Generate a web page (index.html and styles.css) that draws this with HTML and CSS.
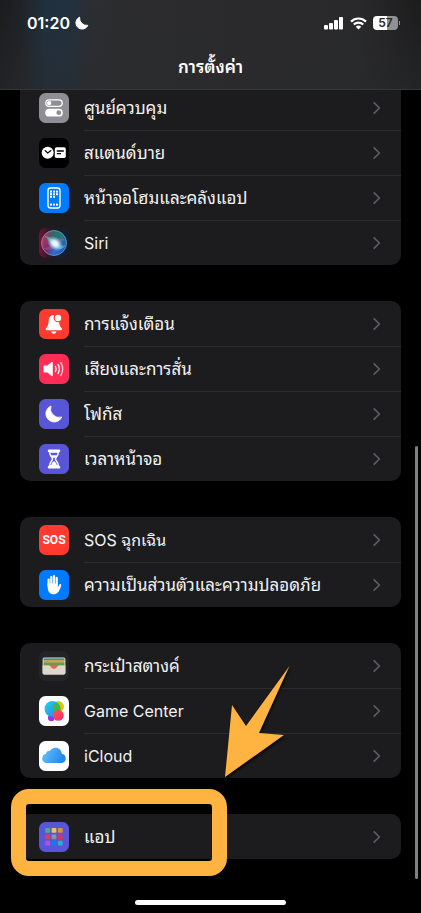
FILE: index.html
```html
<!DOCTYPE html>
<html lang="th">
<head>
  <meta charset="UTF-8" />
  <meta name="viewport" content="width=device-width, initial-scale=1.0"/>
  <title>การตั้งค่า</title>
  <link rel="stylesheet" href="styles.css">
</head>
<body>
  <svg class="defs" width="0" height="0" aria-hidden="true">
    <symbol id="chevron" viewBox="0 0 8 14">
      <path d="M1.2 1.8 L6.4 7 L1.2 12.2" fill="none" stroke="currentColor" stroke-width="1.7" stroke-linecap="round" stroke-linejoin="round"/>
    </symbol>
  </svg>

  <header class="header">
    <div class="status">
      <div class="clock">
        <span>01:20</span>
        <svg width="14" height="14" viewBox="0 0 14 14"><path d="M4.6 1.2 A6.2 6.2 0 1 0 12.8 9.4 A7.4 7.4 0 0 1 4.6 1.2Z" fill="#fff" stroke="#fff" stroke-width="1" stroke-linejoin="round"/></svg>
      </div>
      <div class="signals">
        <svg width="20" height="13" viewBox="0 0 20 13" fill="#fff">
          <rect x="0" y="8" width="4" height="4.5" rx="1"/>
          <rect x="5" y="6" width="4" height="6.5" rx="1"/>
          <rect x="10" y="3" width="4" height="9.5" rx="1"/>
          <rect x="15" y="0" width="4" height="12.5" rx="1"/>
        </svg>
        <svg width="17" height="13" viewBox="0 0 17 13" fill="none" stroke="#fff" stroke-width="2.2">
          <path d="M1 4.6 A10.6 10.6 0 0 1 16 4.6"/>
          <path d="M3.8 7.5 A6.7 6.7 0 0 1 13.2 7.5"/>
          <path d="M8.5 12.6 L5.8 9.8 A3.9 3.9 0 0 1 11.2 9.8Z" fill="#fff" stroke="none"/>
        </svg>
        <div class="battery"><span>57</span></div>
      </div>
    </div>
    <h1>การตั้งค่า</h1>
  </header>

  <main class="settings">
    <nav class="group first">
      <a class="row" href="#">
        <svg class="icon" viewBox="0 0 30 30">
          <rect width="30" height="30" rx="6.5" fill="#8e8e93"/>
          <rect x="6.8" y="6.8" width="16.4" height="6.6" rx="3.3" fill="none" stroke="#fff" stroke-width="1.3"/>
          <circle cx="10.2" cy="10.1" r="2.2" fill="#fff"/>
          <rect x="6.2" y="15.8" width="17.6" height="7.8" rx="3.9" fill="#fff"/>
          <circle cx="19.8" cy="19.7" r="2.4" fill="#8e8e93"/>
        </svg>
        <span class="label">ศูนย์ควบคุม</span>
        <svg class="chevron"><use href="#chevron"/></svg>
      </a>
      <a class="row" href="#">
        <svg class="icon" viewBox="0 0 30 30">
          <rect width="30" height="30" rx="6.5" fill="#000"/>
          <circle cx="8.7" cy="14.8" r="6" fill="#fff"/>
          <path d="M6 12.5 L8.7 15 L12 12.5" fill="none" stroke="#000" stroke-width="1.1" stroke-linecap="round"/>
          <rect x="15.8" y="9.3" width="11" height="10.8" rx="1.8" fill="#fff"/>
          <path d="M17.8 13 H24.8 M17.8 15.6 H22" stroke="#000" stroke-width="1.3"/>
        </svg>
        <span class="label">สแตนด์บาย</span>
        <svg class="chevron"><use href="#chevron"/></svg>
      </a>
      <a class="row" href="#">
        <svg class="icon" viewBox="0 0 30 30">
          <rect width="30" height="30" rx="6.5" fill="#007aff"/>
          <rect x="9" y="5" width="12" height="20" rx="2.4" fill="none" stroke="#fff" stroke-width="1.4"/>
          <g fill="#fff">
            <rect x="11" y="7.6" width="2" height="2"/><rect x="14" y="7.6" width="2" height="2"/><rect x="17" y="7.6" width="2" height="2"/>
            <rect x="11" y="10.2" width="2" height="2"/><rect x="14" y="10.2" width="2" height="2"/><rect x="17" y="10.2" width="2" height="2"/>
            <rect x="11" y="12.8" width="2" height="2"/><rect x="14" y="12.8" width="2" height="2"/>
            <rect x="11" y="20.6" width="2" height="2"/><rect x="14" y="20.6" width="2" height="2"/><rect x="17" y="20.6" width="2" height="2"/>
          </g>
        </svg>
        <span class="label">หน้าจอโฮมและคลังแอป</span>
        <svg class="chevron"><use href="#chevron"/></svg>
      </a>
      <a class="row" href="#">
        <svg class="icon" viewBox="0 0 30 30">
          <defs>
            <linearGradient id="siriBg" x1="0" y1="0" x2="1" y2="0">
              <stop offset="0" stop-color="#7a0f38"/><stop offset=".4" stop-color="#1c1c24"/><stop offset="1" stop-color="#10203a"/>
            </linearGradient>
            <linearGradient id="siriOrb" x1="0" y1=".3" x2="1" y2=".7">
              <stop offset="0" stop-color="#d42b60"/><stop offset=".35" stop-color="#70306c"/><stop offset=".65" stop-color="#2a6fd0"/><stop offset="1" stop-color="#1c58c0"/>
            </linearGradient>
            <radialGradient id="siriTop" cx=".65" cy=".15" r=".6">
              <stop offset="0" stop-color="#1f7a66"/><stop offset="1" stop-color="#1f7a66" stop-opacity="0"/>
            </radialGradient>
            <radialGradient id="siriGlow">
              <stop offset="0" stop-color="#fff"/><stop offset=".35" stop-color="#e3f4ff" stop-opacity=".95"/><stop offset="1" stop-color="#9fdcff" stop-opacity="0"/>
            </radialGradient>
          </defs>
          <rect width="30" height="30" rx="6.5" fill="url(#siriBg)"/>
          <circle cx="15" cy="15" r="12.5" fill="url(#siriOrb)"/>
          <circle cx="15" cy="15" r="12.5" fill="url(#siriTop)" stroke="#799dab" stroke-width=".8"/>
          <path d="M5 8 C10 8 13 11 16 14 C19 17 23 19 27 17 C23 24 16 20 13 17 C10 13 8 10 5 8Z" fill="#62d1df" opacity=".5"/>
          <path d="M5 20 C9 20 12 17 15 14 C19 10 23 9 26 12 C22 13 20 17 17 19 C13 23 8 23 5 20Z" fill="#d861a4" opacity=".3"/>
          <ellipse cx="16" cy="15.5" rx="9" ry="6.5" fill="url(#siriGlow)" transform="rotate(40 16 15.5)"/>
        </svg>
        <span class="label latin">Siri</span>
        <svg class="chevron"><use href="#chevron"/></svg>
      </a>
    </nav>

    <nav class="group">
      <a class="row" href="#">
        <svg class="icon" viewBox="0 0 30 30">
          <rect width="30" height="30" rx="6.5" fill="#ff3b30"/>
          <path d="M14.8 6 C10.8 6.2 9.8 9 9.7 12 C9.5 16 8.5 17.5 7 19.2 C6.2 20.4 6.7 21.2 7.8 21.2 H21.8 C23 21.2 23.4 20.2 22.6 19.2 C21 17.4 20.3 16 20 12.5 L14.8 10Z" fill="#fff"/>
          <path d="M12.2 22.6 H17.4 C17 24.2 16 24.8 14.8 24.8 S12.6 24.2 12.2 22.6Z" fill="#fff"/>
          <circle cx="19" cy="9" r="4.3" fill="#ff3b30"/>
          <circle cx="19" cy="9" r="3.2" fill="#fff"/>
        </svg>
        <span class="label">การแจ้งเตือน</span>
        <svg class="chevron"><use href="#chevron"/></svg>
      </a>
      <a class="row" href="#">
        <svg class="icon" viewBox="0 0 30 30">
          <rect width="30" height="30" rx="6.5" fill="#ff2d55"/>
          <path d="M4.5 12.6 Q4.5 11.6 5.5 11.6 H8.4 L12.3 8.2 Q13.8 7.2 13.8 9 V21 Q13.8 22.8 12.3 21.8 L8.4 18.4 H5.5 Q4.5 18.4 4.5 17.4Z" fill="#fff"/>
          <g fill="none" stroke="#fff" stroke-width="1.4" stroke-linecap="round">
            <path d="M16.4 12.4 Q18 15 16.4 17.6"/>
            <path d="M19 10.4 Q21.8 15 19 19.6"/>
            <path d="M21.8 8.6 Q25.6 15 21.8 21.4" opacity=".75"/>
          </g>
        </svg>
        <span class="label">เสียงและการสั่น</span>
        <svg class="chevron"><use href="#chevron"/></svg>
      </a>
      <a class="row" href="#">
        <svg class="icon" viewBox="0 0 30 30">
          <rect width="30" height="30" rx="6.5" fill="#5856d6"/>
          <path d="M12 7 A8.3 8.3 0 1 0 22.8 18 A8.6 8.6 0 0 1 12 7Z" fill="#fff" stroke="#fff" stroke-width=".8" stroke-linejoin="round"/>
        </svg>
        <span class="label">โฟกัส</span>
        <svg class="chevron"><use href="#chevron"/></svg>
      </a>
      <a class="row" href="#">
        <svg class="icon" viewBox="0 0 30 30">
          <rect width="30" height="30" rx="6.5" fill="#5856d6"/>
          <rect x="8.8" y="5.4" width="12.4" height="2.8" rx="1.2" fill="#fff"/>
          <rect x="8.8" y="21.8" width="12.4" height="2.8" rx="1.2" fill="#fff"/>
          <path d="M10.6 8 C10.6 12 13.5 13 13.5 15 S10.6 18 10.6 22 H19.4 C19.4 18 16.5 17 16.5 15 S19.4 12 19.4 8Z" fill="none" stroke="#fff" stroke-width="1.4"/>
          <path d="M12 11.2 H18 Q17 13 15 14.3 Q13 13 12 11.2Z M15 17 Q18 19 18 21.8 H12 Q12 19 15 17Z" fill="#fff"/>
        </svg>
        <span class="label">เวลาหน้าจอ</span>
        <svg class="chevron"><use href="#chevron"/></svg>
      </a>
    </nav>

    <nav class="group">
      <a class="row" href="#">
        <span class="icon sos">SOS</span>
        <span class="label latin">SOS ฉุกเฉิน</span>
        <svg class="chevron"><use href="#chevron"/></svg>
      </a>
      <a class="row" href="#">
        <svg class="icon" viewBox="0 0 30 30">
          <rect width="30" height="30" rx="6.5" fill="#007aff"/>
          <g stroke="#fff" stroke-width="2.2" stroke-linecap="round" fill="none">
            <path d="M9.6 15.5 V9.6"/>
            <path d="M12.3 14 V7"/>
            <path d="M15 14 V6"/>
            <path d="M17.7 15 V7.8"/>
          </g>
          <path d="M8.5 13.5 H18.8 L18.8 17.6 L20.4 14.6 C21 13.6 22.6 14.2 22.2 15.4 C21.3 18.4 20.4 20.8 18.8 22.6 C16.6 25 12 25 10.1 22.2 C8.6 20 8.5 17 8.5 13.5Z" fill="#fff"/>
        </svg>
        <span class="label">ความเป็นส่วนตัวและความปลอดภัย</span>
        <svg class="chevron"><use href="#chevron"/></svg>
      </a>
    </nav>

    <nav class="group">
      <a class="row" href="#">
        <svg class="icon" viewBox="0 0 30 30">
          <rect width="30" height="30" rx="6.5" fill="#242426"/>
          <rect x="3.6" y="6.4" width="22.8" height="17" rx="1.6" fill="#dcd8cc"/>
          <rect x="4.6" y="7.4" width="20.8" height="2" fill="#3c8a9b"/>
          <rect x="4.6" y="9.3" width="20.8" height="2.4" fill="#c9a43b"/>
          <rect x="4.6" y="11.5" width="20.8" height="3.2" fill="#6f9a45"/>
          <path d="M11 14 H19 V17 L15 18.6 L11 17Z" fill="#dd6a58"/>
          <path d="M3.6 14.4 H9.8 C11.8 14.4 12.2 17.8 15 17.8 S18.2 14.4 20.2 14.4 H26.4 V22 Q26.4 23.4 24.8 23.4 H5.2 Q3.6 23.4 3.6 22Z" fill="#dcd8cc"/>
        </svg>
        <span class="label">กระเป๋าสตางค์</span>
        <svg class="chevron"><use href="#chevron"/></svg>
      </a>
      <a class="row" href="#">
        <svg class="icon" viewBox="0 0 30 30">
          <defs>
            <linearGradient id="gcYellow" x1="0" y1="0" x2="1" y2="1"><stop offset="0" stop-color="#b9dc1b"/><stop offset="1" stop-color="#ffb400"/></linearGradient>
            <linearGradient id="gcBlue" x1="0" y1="0" x2="1" y2="1"><stop offset="0" stop-color="#28d7e8"/><stop offset=".5" stop-color="#25a9ed"/><stop offset="1" stop-color="#3c7fe0"/></linearGradient>
            <linearGradient id="gcPink" x1="0" y1="0" x2="1" y2="1"><stop offset="0" stop-color="#f4583f"/><stop offset="1" stop-color="#ff267f"/></linearGradient>
          </defs>
          <rect width="30" height="30" rx="6.5" fill="#fff"/>
          <circle cx="19.4" cy="10.6" r="5.6" fill="url(#gcYellow)"/>
          <circle cx="12.3" cy="21.8" r="3.4" fill="#9135ee"/>
          <ellipse cx="13.4" cy="12.8" rx="7.9" ry="7.9" fill="url(#gcBlue)"/>
          <path d="M15 7 A5.6 5.6 0 0 1 21 15 A6 6 0 0 1 15 15 A7 7 0 0 1 15 7Z" fill="#48b936" opacity=".85"/>
          <circle cx="19.3" cy="19.4" r="5.4" fill="url(#gcPink)"/>
        </svg>
        <span class="label latin">Game Center</span>
        <svg class="chevron"><use href="#chevron"/></svg>
      </a>
      <a class="row" href="#">
        <svg class="icon" viewBox="0 0 30 30">
          <defs>
            <linearGradient id="cloud" x1="0" y1="0" x2="1" y2=".3"><stop offset="0" stop-color="#6cc4fa"/><stop offset="1" stop-color="#2189f2"/></linearGradient>
          </defs>
          <rect width="30" height="30" rx="6.5" fill="#fff"/>
          <path d="M8.2 22 C5.2 22 3.2 20 3.2 17.4 C3.2 15 4.8 13.2 7 12.8 C7 10.8 8.8 9.6 10.6 10.2 C11.8 8 14 6.8 16.4 6.8 C20 6.8 22.6 9.4 22.8 12.8 C25.2 13.2 26.8 15 26.8 17.4 C26.8 20 24.8 22 22.2 22Z" fill="url(#cloud)"/>
        </svg>
        <span class="label latin">iCloud</span>
        <svg class="chevron"><use href="#chevron"/></svg>
      </a>
    </nav>

    <nav class="group">
      <a class="row" href="#">
        <svg class="icon" viewBox="0 0 30 30">
          <rect width="30" height="30" rx="6.5" fill="#5856d6"/>
          <rect x="6.3" y="6" width="4.8" height="4.8" rx=".7" fill="#45ad91"/>
          <rect x="12.6" y="6" width="4.8" height="4.8" rx=".7" fill="#eec25c"/>
          <rect x="18.9" y="6" width="4.8" height="4.8" rx=".7" fill="#e58b48"/>
          <rect x="6.3" y="12.4" width="4.8" height="4.8" rx=".7" fill="#e13b58"/>
          <rect x="12.6" y="12.4" width="4.8" height="4.8" rx=".7" fill="#8e8eaa"/>
          <rect x="18.9" y="12.4" width="4.8" height="4.8" rx=".7" fill="#df3264"/>
          <rect x="6.3" y="18.8" width="4.8" height="4.8" rx=".7" fill="#a856e2"/>
          <rect x="12.6" y="18.8" width="4.8" height="4.8" rx=".7" fill="#1778f2"/>
          <rect x="18.9" y="18.8" width="4.8" height="4.8" rx=".7" fill="#32aacb"/>
        </svg>
        <span class="label">แอป</span>
        <svg class="chevron"><use href="#chevron"/></svg>
      </a>
      <div class="highlight"></div>
      <svg class="arrow" width="70" height="118" viewBox="0 0 70 118">
        <path d="M65.5 2 L35 69 L60 71 L1 113 L8 41 L22 62Z" fill="#ffb340"/>
      </svg>
    </nav>
  </main>

  <div class="scrollbar"></div>
  <footer class="home"><div class="home-bar"></div></footer>
</body>
</html>
```

FILE: styles.css
```css
* {
  box-sizing: border-box;
}
body {
  margin: 0;
  min-height: 100vh;
  position: relative;
  display: flex;
  flex-direction: column;
  background: #000;
  color: #f2f2f4;
  font-family: Inter, "Noto Sans Thai Looped", "Noto Looped Thai", Loma, Garuda, Waree, "Noto Sans Thai", "Noto Sans", sans-serif;
  font-size: 17px;
}
.defs {
  position: absolute;
}

/* top bar */
.header {
  position: sticky;
  top: 0;
  z-index: 2;
  height: 90px;
  border-bottom: 1px solid #363638;
  background:
    linear-gradient(to bottom, rgba(42, 43, 45, 0) 0%, rgba(42, 43, 45, 0.5) 100%),
    linear-gradient(to right, #1a1c1e 0, #1e2226 20px, #20303f 45px, #21313f 70px, #2b2e31 92px, #2c2c2e 120px, #29292b 85%, #1c1c1d 100%);
}
.status {
  display: flex;
  justify-content: space-between;
  align-items: center;
  height: 46px;
  padding: 0 23px 0 27px;
}
.clock {
  display: flex;
  align-items: center;
  gap: 5px;
  color: #fff;
  font-size: 16px;
  font-weight: 600;
}
.signals {
  display: flex;
  align-items: center;
  gap: 6px;
}
.battery {
  position: relative;
  width: 25px;
  height: 14px;
  border-radius: 4px;
  background: linear-gradient(to right, #fff 57%, #929294 57%);
  color: #262628;
  font-size: 12px;
  font-weight: 600;
  line-height: 14px;
  text-align: center;
}
.battery::after {
  content: "";
  position: absolute;
  right: -2px;
  top: 5px;
  width: 1px;
  height: 4px;
  background: #929294;
}
h1 {
  margin: 0;
  color: #fff;
  font-size: 17px;
  font-weight: 600;
  line-height: 42px;
  text-align: center;
}

/* list, scrolled a little way under the top bar */
.settings {
  display: flex;
  flex-direction: column;
  gap: 36px;
  margin-top: -5px;
  padding: 0 20px;
}
.group {
  position: relative;
  border-radius: 10px;
  background: #1c1c1e;
}
.first {
  border-radius: 0 0 10px 10px;
}
.row {
  position: relative;
  display: flex;
  align-items: center;
  gap: 15px;
  height: 45px;
  padding: 0 20px 0 19px;
  color: inherit;
  text-decoration: none;
}
.row + .row::before {
  content: "";
  position: absolute;
  top: 0;
  left: 64px;
  right: 0;
  height: 1px;
  background: #2d2d2f;
}
.icon {
  flex: none;
  width: 30px;
  height: 30px;
}
.sos {
  border-radius: 7px;
  background: #ff3b30;
  color: #fff;
  font-family: Roboto, sans-serif;
  font-size: 12px;
  font-weight: 700;
  line-height: 30px;
  text-align: center;
}
.label {
  flex: 1;
  line-height: 24px;
  white-space: nowrap;
}
.latin {
  font-size: 16px;
}
.chevron {
  width: 8px;
  height: 14px;
  color: #5d5d61;
}

/* callout */
.highlight {
  position: absolute;
  left: -9px;
  top: -25px;
  width: 216px;
  height: 87px;
  border: 15px solid #ffb340;
  border-radius: 18px;
  pointer-events: none;
}
.arrow {
  position: absolute;
  left: 204px;
  top: -150px;
  filter: drop-shadow(1px 2px 1px rgba(0, 0, 0, 0.7));
  pointer-events: none;
}

.scrollbar {
  position: absolute;
  right: 3px;
  top: 446px;
  width: 3px;
  height: 433px;
  border-radius: 2px;
  background: #808082;
}
.home {
  display: flex;
  justify-content: center;
  margin-top: auto;
  padding-bottom: 8px;
}
.home-bar {
  width: 36%;
  height: 5px;
  border-radius: 3px;
  background: #fff;
}
```
